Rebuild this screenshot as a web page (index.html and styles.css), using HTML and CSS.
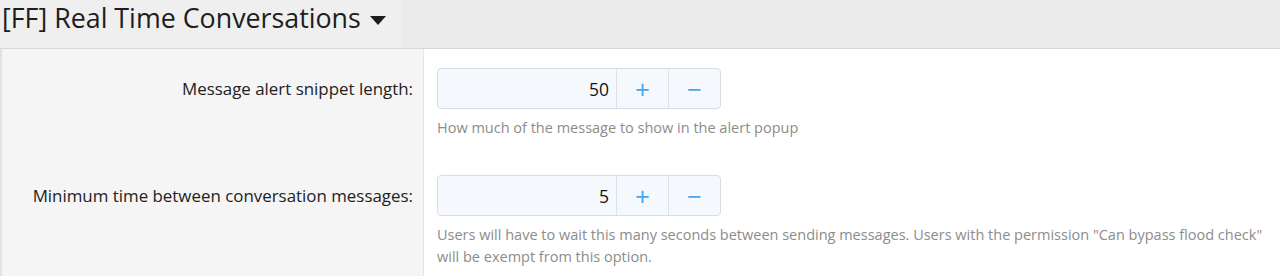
FILE: index.html
```html
<!DOCTYPE html>
<html lang="en">
<head>
    <meta charset="UTF-8">
    <title>[FF] Real Time Conversations</title>
    <link rel="stylesheet" href="styles.css">
</head>
<body>

<div class="block-header">
    <h2 class="block-title">[FF] Real Time Conversations <span class="caret"></span></h2>
</div>

<div class="block-body">
    <div class="form-row">
        <div class="form-label">Message alert snippet length:</div>
        <div class="form-input">
            <div class="spinbox">
                <input type="text" class="spinbox-value" value="50">
                <button class="spinbox-btn">+</button>
                <button class="spinbox-btn">&minus;</button>
            </div>
            <div class="form-hint">How much of the message to show in the alert popup</div>
        </div>
    </div>

    <div class="form-row">
        <div class="form-label">Minimum time between conversation messages:</div>
        <div class="form-input">
            <div class="spinbox">
                <input type="text" class="spinbox-value" value="5">
                <button class="spinbox-btn">+</button>
                <button class="spinbox-btn">&minus;</button>
            </div>
            <div class="form-hint">Users will have to wait this many seconds between sending messages. Users with the permission "Can bypass flood check" will be exempt from this option.</div>
        </div>
    </div>
</div>

</body>
</html>
```

FILE: styles.css
```css
body {
    margin: 0;
    font-family: 'Open Sans', 'Noto Sans', sans-serif;
    color: #141414;
    background-color: #fff;
}

.block-header {
    background-color: #ebebeb;
    height: 48px;
    border-bottom: 1px solid #d8d8d8;
}

.block-title {
    display: inline-block;
    margin: 0;
    padding: 0 16px 0 2px;
    height: 48px;
    line-height: 36px;
    font-size: 26.8px;
    font-weight: normal;
    color: #1d1d1d;
    background-color: #efefef;
}

.caret {
    display: inline-block;
    width: 0;
    height: 0;
    margin-left: 2px;
    vertical-align: middle;
    border-left: 8px solid transparent;
    border-right: 8px solid transparent;
    border-top: 9px solid #1d1d1d;
}

.block-body {
    border-left: 2px solid #e2e2e2;
}

.form-row {
    display: flex;
}

.form-label {
    width: 422px;
    flex-shrink: 0;
    padding: 28px 10px 0 0;
    box-sizing: border-box;
    text-align: right;
    font-size: 16.9px;
    color: #222;
    background-color: #f5f5f5;
    border-right: 1px solid #e4e4e4;
}

.form-input {
    flex: 1;
    padding: 19px 2px 17px 13px;
}

.spinbox {
    display: flex;
    width: 284px;
    height: 41px;
    border: 1px solid #d8dde4;
    border-radius: 4px;
    box-sizing: border-box;
    overflow: hidden;
    background-color: #f5f9fd;
}

.spinbox-value {
    width: 178px;
    border: none;
    padding: 0 7px 0 0;
    text-align: right;
    font-family: inherit;
    font-size: 17.5px;
    color: #141414;
    background: transparent;
    box-sizing: border-box;
}

.spinbox-btn {
    width: 53px;
    border: none;
    border-left: 1px solid #dde2e8;
    background: transparent;
    color: #47a7eb;
    font-family: inherit;
    font-size: 26px;
    line-height: 1;
    padding: 0;
}

.form-hint {
    margin-top: 8px;
    font-size: 14.5px;
    line-height: 22px;
    color: #8c8c8c;
}
```
